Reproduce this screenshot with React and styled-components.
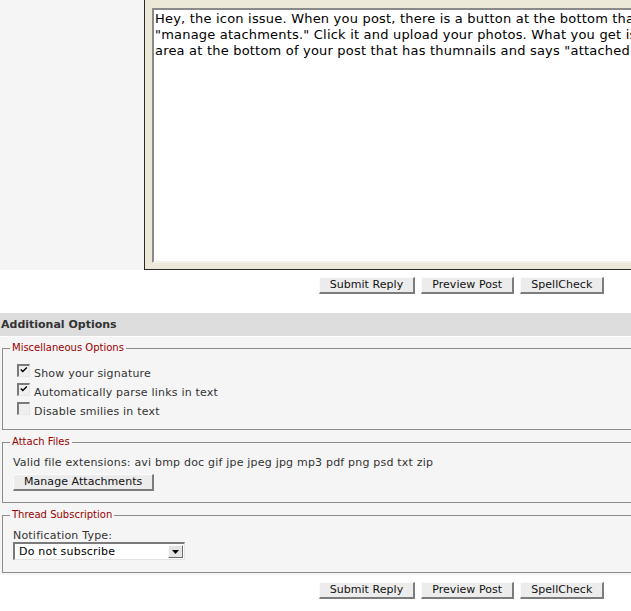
import React from "react";
import styled, { createGlobalStyle } from "styled-components";

const GlobalStyle = createGlobalStyle`
  html, body { margin: 0; padding: 0; background: #ffffff; overflow: hidden; }
  body { font-family: "DejaVu Sans", Verdana, sans-serif; color: #333; }
  * { box-sizing: border-box; }
`;

const Page = styled.div`
  width: 923px;
`;

const EditorRow = styled.div`
  display: flex;
  height: 270px;
`;

const SideCell = styled.div`
  width: 144px;
  background: #f5f5f5;
`;

const EditorCell = styled.div`
  flex: 1;
  background: #ece9d8;
  border-left: 1px solid #2b2b2b;
  border-bottom: 1px solid #2b2b2b;
  padding: 8px 7px 6px 7px;
`;

const MessageArea = styled.textarea`
  display: block;
  width: 100%;
  height: 255px;
  margin: 0;
  padding: 1px;
  resize: none;
  background: #ffffff;
  color: #000;
  font-family: "DejaVu Sans", Verdana, sans-serif;
  font-size: 13px;
  line-height: 16px;
  letter-spacing: 0.2px;
  white-space: pre;
  overflow: hidden;
  border-style: solid;
  border-width: 2px;
  border-color: #8a8a8a #f3f1e8 #f3f1e8 #8a8a8a;
  outline: none;
`;

const ButtonBar = styled.div`
  display: flex;
  justify-content: center;
  gap: 6px;
  padding: ${(p) => p.$pad};
`;

const Button = styled.button`
  height: 17px;
  margin: 0;
  padding: 0 10px;
  font-family: "DejaVu Sans", Verdana, sans-serif;
  font-size: 11px;
  line-height: 14px;
  letter-spacing: 0.05px;
  color: #111;
  background: #ececec;
  border-style: solid;
  border-width: 1px 2px 2px 1px;
  border-color: #fbfbfb #7c7c7c #7c7c7c #fbfbfb;
  cursor: pointer;
`;

const SectionHeader = styled.div`
  height: 24px;
  line-height: 23px;
  padding-left: 1px;
  background: #dddddd;
  border-bottom: 1px solid #ffffff;
  font-size: 11px;
  font-weight: bold;
  color: #333;
`;

const Panel = styled.div`
  background: #f5f5f5;
  padding: 5px 0 2px 2px;
  display: flex;
  flex-direction: column;
  gap: 6px;
`;

const Fieldset = styled.fieldset`
  margin: 0;
  padding: ${(p) => p.$pad};
  border: 1px solid #8c8c8c;
  min-width: 0;
`;

const Legend = styled.legend`
  margin-left: -3px;
  padding: 0 2px;
  font-size: 10px;
  line-height: 12px;
  color: #990000;
`;

const CheckRow = styled.label`
  display: flex;
  align-items: flex-start;
  height: 19px;
  font-size: 11px;
  line-height: 19px;
  letter-spacing: 0.2px;
  color: #333;
`;

const CheckBox = styled.span`
  display: block;
  flex: none;
  width: 13px;
  height: 13px;
  margin: 0 4px 0 4px;
  padding: 1px 0 0 1px;
  background: #efefef;
  border-style: solid;
  border-width: 2px 1px 1px 2px;
  border-color: #7a7a7a #e6e6e6 #e6e6e6 #7a7a7a;

  svg { display: block; }
`;

const Text = styled.div`
  font-size: 11px;
  line-height: ${(p) => p.$lh || "14px"};
  letter-spacing: 0.2px;
  color: #333;
`;

const ActionSpacer = styled.div`
  margin-top: 4px;
  display: flex;
`;

const SelectBox = styled.div`
  display: flex;
  align-items: center;
  width: 172px;
  height: 18px;
  overflow: hidden;
  background: #fff;
  border-style: solid;
  border-width: 2px 1px 1px 2px;
  border-color: #7a7a7a #e4e4e4 #e4e4e4 #7a7a7a;
`;

const NativeSelect = styled.select`
  flex: 1;
  width: 0;
  min-width: 0;
  appearance: none;
  -webkit-appearance: none;
  border: none;
  background: transparent;
  padding: 0 0 0 4px;
  margin: 0;
  height: 15px;
  font-family: "DejaVu Sans", Verdana, sans-serif;
  font-size: 11px;
  letter-spacing: 0.2px;
  color: #000;
  outline: none;
`;

const ArrowButton = styled.span`
  display: flex;
  flex: none;
  align-items: center;
  justify-content: center;
  width: 15px;
  height: 13px;
  margin-right: 1px;
  background: #e4e4e4;
  border-style: solid;
  border-width: 1px;
  border-color: #fafafa #6e6e6e #6e6e6e #fafafa;
`;

function Check({ checked }) {
  return (
    <CheckBox>
      {checked && (
        <svg width="8" height="7" viewBox="0 0 8 7">
          <path d="M0.8 2.4 L2.8 4.4 L6.8 0.6" fill="none" stroke="#000" strokeWidth="1.4" />
        </svg>
      )}
    </CheckBox>
  );
}

function Actions({ pad }) {
  return (
    <ButtonBar $pad={pad}>
      <Button type="button">Submit Reply</Button>
      <Button type="button">Preview Post</Button>
      <Button type="button">SpellCheck</Button>
    </ButtonBar>
  );
}

const message =
  'Hey, the icon issue. When you post, there is a button at the bottom that says\n' +
  '"manage atachments." Click it and upload your photos. What you get is an\n' +
  'area at the bottom of your post that has thumnails and says "attached images".';

export default function App() {
  return (
    <Page>
      <GlobalStyle />
      <EditorRow>
        <SideCell />
        <EditorCell>
          <MessageArea defaultValue={message} wrap="off" />
        </EditorCell>
      </EditorRow>
      <Actions pad="7px 0 19px 0" />
      <SectionHeader>Additional Options</SectionHeader>
      <Panel>
        <Fieldset $pad="10px 10px 8px 10px">
          <Legend>Miscellaneous Options</Legend>
          <CheckRow>
            <Check checked />
            Show your signature
          </CheckRow>
          <CheckRow>
            <Check checked />
            Automatically parse links in text
          </CheckRow>
          <CheckRow>
            <Check />
            Disable smilies in text
          </CheckRow>
        </Fieldset>
        <Fieldset $pad="8px 10px 11px 10px">
          <Legend>Attach Files</Legend>
          <Text>Valid file extensions: avi bmp doc gif jpe jpeg jpg mp3 pdf png psd txt zip</Text>
          <ActionSpacer>
            <Button type="button">Manage Attachments</Button>
          </ActionSpacer>
        </Fieldset>
        <Fieldset $pad="9px 10px 12px 10px">
          <Legend>Thread Subscription</Legend>
          <Text $lh="12px">Notification Type:</Text>
          <SelectBox>
            <NativeSelect defaultValue="none">
              <option value="none">Do not subscribe</option>
              <option value="instant">Instant notification by email</option>
            </NativeSelect>
            <ArrowButton>
              <svg width="7" height="4" viewBox="0 0 7 4">
                <path d="M0 0 H7 L3.5 4 Z" fill="#000" />
              </svg>
            </ArrowButton>
          </SelectBox>
        </Fieldset>
      </Panel>
      <Actions pad="7px 0 12px 0" />
    </Page>
  );
}
